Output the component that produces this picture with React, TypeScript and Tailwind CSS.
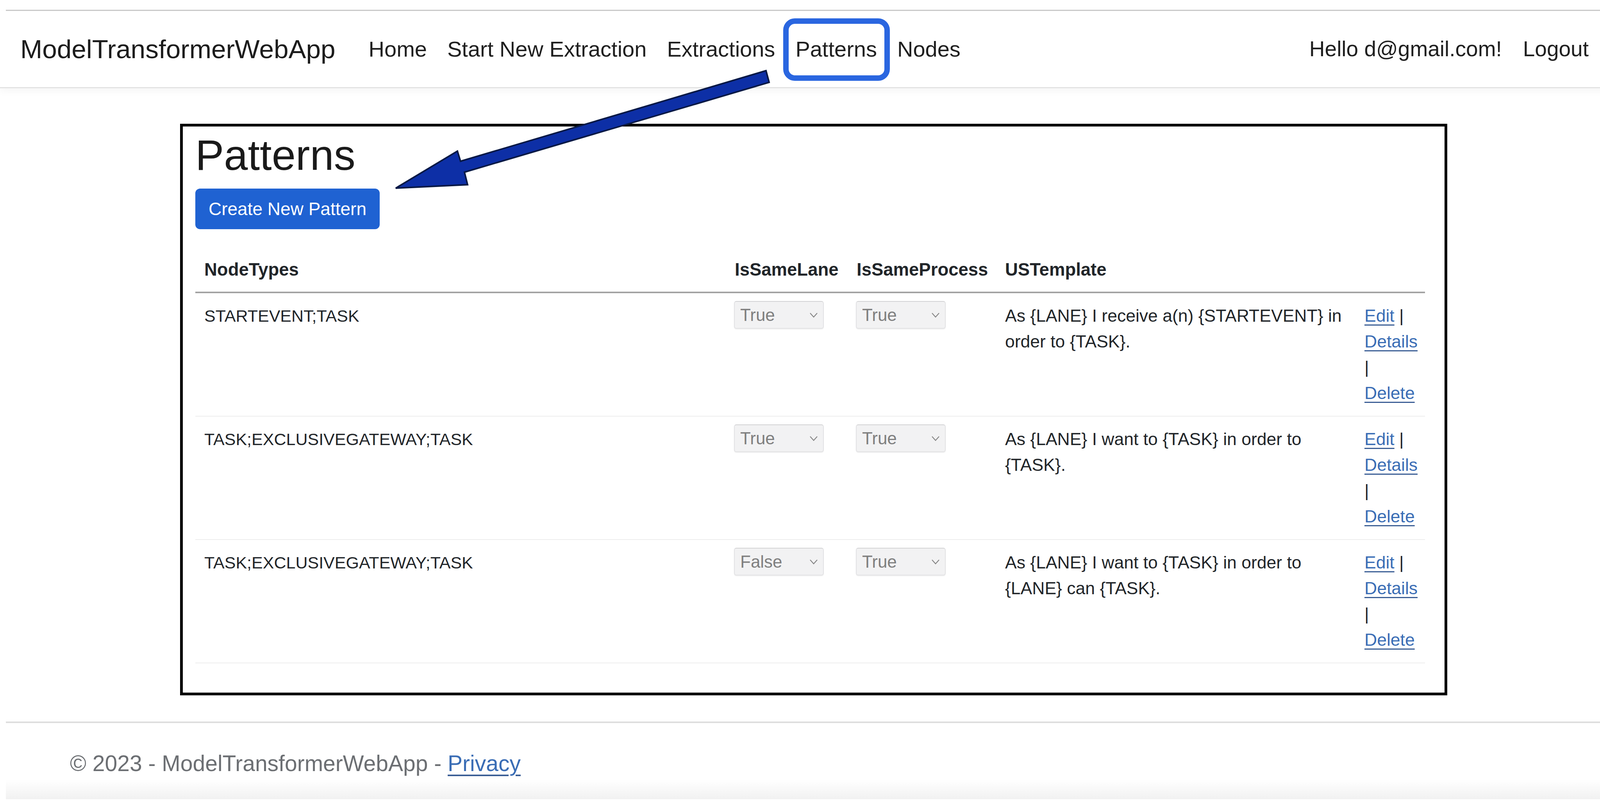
import React from "react";

type Pattern = {
  nodes: string;
  lane: string;
  process: string;
  template: string;
};

const patterns: Pattern[] = [
  {
    nodes: "STARTEVENT;TASK",
    lane: "True",
    process: "True",
    template: "As {LANE} I receive a(n) {STARTEVENT} in order to {TASK}.",
  },
  {
    nodes: "TASK;EXCLUSIVEGATEWAY;TASK",
    lane: "True",
    process: "True",
    template: "As {LANE} I want to {TASK} in order to {TASK}.",
  },
  {
    nodes: "TASK;EXCLUSIVEGATEWAY;TASK",
    lane: "False",
    process: "True",
    template: "As {LANE} I want to {TASK} in order to {LANE} can {TASK}.",
  },
];

function FakeSelect({ value }: { value: string }) {
  return (
    <div className="flex items-center justify-between w-[230px] h-[71px] pl-[14px] pr-[13px] bg-[#f2f2f3] border-2 border-[#e2e2e4] border-t-[#d2d2d4] rounded-[6px] shadow-[0_2px_2px_rgba(0,0,0,0.06)] text-[#7f7f7f] text-[44px] leading-none">
      <span>{value}</span>
      <svg width="22" height="14" viewBox="0 0 22 14" fill="none">
        <path d="M2 2 L11 12 L20 2" stroke="#858585" strokeWidth="2.2" />
      </svg>
    </div>
  );
}

function Link({ children }: { children: React.ReactNode }) {
  return (
    <a href="#" className="text-[#3a6db5] underline decoration-[#3c5f96] decoration-[3px] underline-offset-[7px]">
      {children}
    </a>
  );
}

export default function App() {
  return (
    <div className="relative w-[4154px] min-h-[2067px] bg-white font-['Liberation_Sans',Arial,sans-serif] text-[#212529]">
      {/* window top edge */}
      <div className="h-[25px]" />
      <div className="ml-[15px] h-[3px] bg-[#cacaca]" />

      {/* navbar */}
      <nav className="flex items-center justify-between h-[198px] pl-[52px] pr-[87px] border-b-[3px] border-[#e3e3e3] shadow-[0_8px_18px_rgba(0,0,0,0.04)]">
        <div className="flex items-center">
          <span className="text-[67.5px] text-[#1c1c1c] mr-[85px]">ModelTransformerWebApp</span>
          <div className="flex items-center gap-[52px] text-[56px] text-[#1f1f1f]">
            <span>Home</span>
            <span>Start New Extraction</span>
            <span>Extractions</span>
            <span>Patterns</span>
            <span>Nodes</span>
          </div>
        </div>
        <div className="flex items-center gap-[54px] text-[55px] text-[#1f1f1f]">
          <span>Hello d@gmail.com!</span>
          <span>Logout</span>
        </div>
      </nav>

      {/* annotation: highlight around Patterns */}
      <div className="absolute left-[2005px] top-[47px] w-[273px] h-[160px] border-[14px] border-[#2a66e0] rounded-[30px] pointer-events-none" />

      {/* main card */}
      <main className="mt-[91px] ml-[461px] w-[3244px] border-[7px] border-black pt-[7px] pl-[32px] pr-[50px] pb-[75px]">
        <h1 className="text-[110px] leading-[132px] text-[#1a1a1a]">Patterns</h1>
        <button className="mt-[20px] h-[104px] px-[34px] rounded-[12px] bg-[#1f62d2] text-white text-[46px]">
          Create New Pattern
        </button>

        <table className="mt-[48px] w-[3148px] table-fixed border-collapse text-[44.5px] leading-[66px]">
          <thead>
            <tr className="border-b-[4px] border-[#a3a3a3] text-[45.5px]">
              <th className="w-[1358px] px-[23px] py-[23px] text-left font-bold">NodeTypes</th>
              <th className="w-[312px] px-[23px] py-[23px] text-left font-bold">IsSameLane</th>
              <th className="w-[380px] px-[23px] py-[23px] text-left font-bold">IsSameProcess</th>
              <th className="w-[921px] px-[23px] py-[23px] text-left font-bold">USTemplate</th>
              <th className="w-[177px] pl-[23px] pr-[14px] py-[23px]" />
            </tr>
          </thead>
          <tbody>
            {patterns.map((p, i) => (
              <tr key={i} className="border-b-2 border-[#ededed]">
                <td className="align-top px-[23px] py-[25px] text-[43px]">{p.nodes}</td>
                <td className="align-top px-[21px] pt-[20px]">
                  <FakeSelect value={p.lane} />
                </td>
                <td className="align-top px-[21px] pt-[20px]">
                  <FakeSelect value={p.process} />
                </td>
                <td className="align-top px-[23px] py-[25px]">{p.template}</td>
                <td className="align-top pl-[22px] pr-[14px] py-[25px]">
                  <Link>Edit</Link> | <Link>Details</Link> | <Link>Delete</Link>
                </td>
              </tr>
            ))}
          </tbody>
        </table>
      </main>

      {/* annotation: arrow from nav to heading */}
      <svg className="absolute left-0 top-0 pointer-events-none" width="4154" height="600" viewBox="0 0 4154 600">
        <polygon
          points="1961,181 1179,413 1171,387 1013,482 1197,473 1189,441 1969,211"
          fill="#0d2fa6"
          stroke="#071845"
          strokeWidth="4"
          strokeLinejoin="miter"
        />
      </svg>

      {/* footer */}
      <footer className="mt-[67px] ml-[15px] border-t-[4px] border-[#dedede]">
        <div className="pt-[61px] pl-[164px] text-[57px] leading-[84px] text-[#6c6f73]">
          © 2023 - ModelTransformerWebApp -{" "}
          <a href="#" className="text-[#3a6db5] underline decoration-[#3c5f96] decoration-[4px] underline-offset-[9px]">
            Privacy
          </a>
        </div>
        <div className="h-[50px] bg-gradient-to-b from-white to-[#f1f1f1]" />
      </footer>
    </div>
  );
}
